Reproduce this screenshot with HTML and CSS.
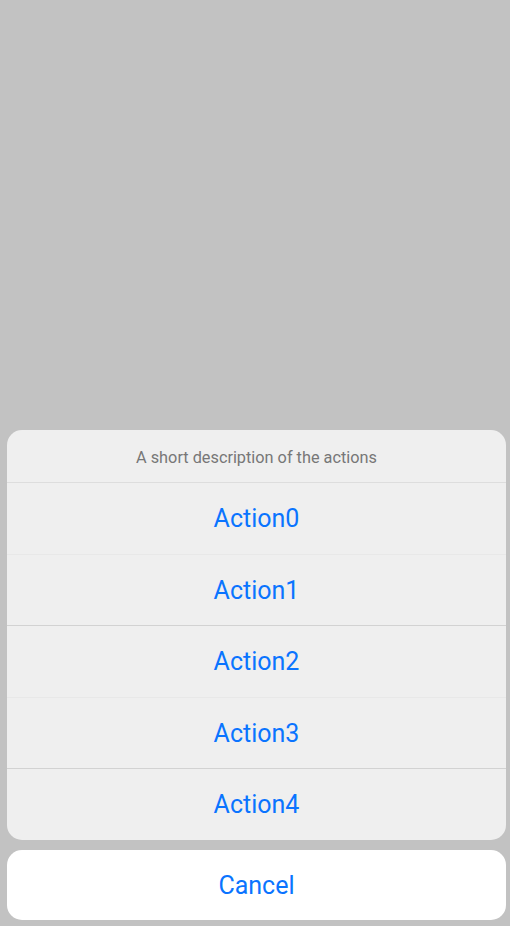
FILE: index.html
```html
<!DOCTYPE html>
<html>
<head>
<meta charset="utf-8">
<link rel="stylesheet" href="styles.css">
</head>
<body>
<div class="screen">
  <div class="spacer"></div>
  <div class="sheet">
    <div class="header">A short description of the actions</div>
    <div class="row r71 div-mid">Action0</div>
    <div class="row r70 div-faint">Action1</div>
    <div class="row r71 div-mid">Action2</div>
    <div class="row r70 div-faint">Action3</div>
    <div class="row r71 div-mid">Action4</div>
  </div>
  <div class="cancel">Cancel</div>
</div>
</body>
</html>
```
FILE: styles.css
```css
html, body {
  margin: 0;
  padding: 0;
  background: #c2c2c2;
}
.screen {
  width: 510px;
  height: 926px;
  display: flex;
  flex-direction: column;
  padding: 0 4px 6px 7px;
  box-sizing: border-box;
  font-family: Roboto, "Noto Sans", sans-serif;
}
.spacer {
  flex: 1;
}
.sheet {
  background: #efefef;
  border-radius: 15px;
  overflow: hidden;
  display: flex;
  flex-direction: column;
}
.header {
  height: 53px;
  padding-top: 2px;
  box-sizing: border-box;
  display: flex;
  align-items: center;
  justify-content: center;
  font-size: 16.3px;
  color: #777777;
  border-bottom: 1px solid #dddddd;
}
.row {
  display: flex;
  align-items: center;
  justify-content: center;
  font-size: 25px;
  color: #0a74ff;
}
.r71 { height: 71px; }
.r70 { height: 70px; }
.div-mid + .div-faint { border-top: 1px solid #e8e8e8; }
.div-faint + .div-mid { border-top: 1px solid #d2d2d2; }
.cancel {
  margin-top: 10px;
  height: 70px;
  background: #ffffff;
  border-radius: 15px;
  display: flex;
  align-items: center;
  justify-content: center;
  font-size: 25px;
  color: #0a74ff;
}
```
